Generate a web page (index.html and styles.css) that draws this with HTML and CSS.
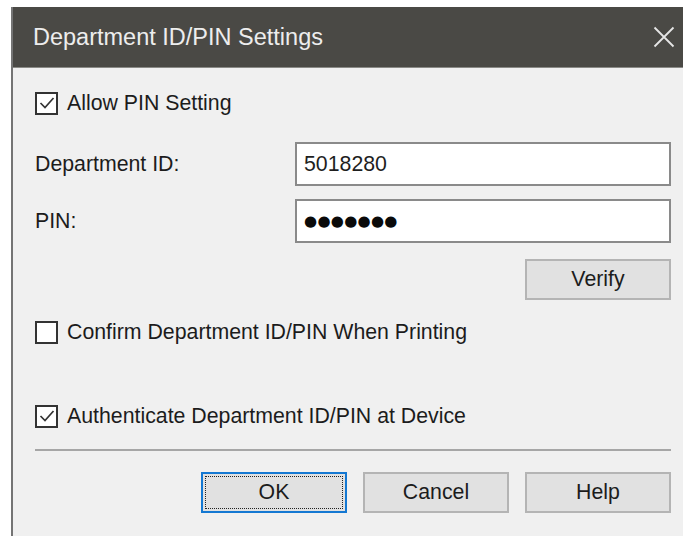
FILE: index.html
```html
<!DOCTYPE html>
<html lang="en">
<head>
<meta charset="utf-8">
<title>Department ID/PIN Settings</title>
<link rel="stylesheet" href="styles.css">
</head>
<body>
<div class="window">
  <div class="titlebar">
    <span class="title">Department ID/PIN Settings</span>
    <svg class="close" width="22" height="22" viewBox="0 0 22 22" aria-label="Close">
      <path d="M1.5 1.5 L20.5 20.5 M20.5 1.5 L1.5 20.5" stroke="#e6e6e6" stroke-width="1.8" fill="none"/>
    </svg>
  </div>
  <div class="content">
    <label class="check row-allow">
      <span class="box"><svg viewBox="0 0 18 18" width="18" height="18"><path d="M2.5 9 L7 13.5 L15.5 4" stroke="#333" stroke-width="1.7" fill="none"/></svg></span>
      <span>Allow PIN Setting</span>
    </label>

    <div class="field row-id">
      <span class="lbl">Department ID:</span>
      <div class="input">5018280</div>
    </div>
    <div class="field row-pin">
      <span class="lbl">PIN:</span>
      <div class="input"><span class="dots">●●●●●●●</span></div>
    </div>

    <div class="verify-row">
      <button class="btn">Verify</button>
    </div>

    <label class="check row-confirm">
      <span class="box"></span>
      <span>Confirm Department ID/PIN When Printing</span>
    </label>

    <label class="check row-auth">
      <span class="box"><svg viewBox="0 0 18 18" width="18" height="18"><path d="M2.5 9 L7 13.5 L15.5 4" stroke="#333" stroke-width="1.7" fill="none"/></svg></span>
      <span>Authenticate Department ID/PIN at Device</span>
    </label>

    <div class="separator"></div>

    <div class="actions">
      <button class="btn default"><span class="focus">OK</span></button>
      <button class="btn">Cancel</button>
      <button class="btn">Help</button>
    </div>
  </div>
</div>
</body>
</html>
```

FILE: styles.css
```css
html, body {
  margin: 0;
  padding: 0;
  background: #ffffff;
  height: 100%;
  overflow: hidden;
}

body {
  font-family: "Liberation Sans", Arial, sans-serif;
  font-size: 21.3px;
  color: #1c1c1c;
}

.window {
  margin: 7px 0 0 11px;
  border-left: 2px solid #747474;
  height: calc(100% - 7px);
  display: flex;
  flex-direction: column;
  background: #f0f0f0;
}

.titlebar {
  height: 60px;
  flex: none;
  background: #4a4945;
  border-bottom: 1px solid #8a8a86;
  display: flex;
  align-items: center;
  justify-content: space-between;
  padding: 0 8px 0 20px;
}

.title {
  color: #ededed;
  font-size: 23.5px;
}

.close {
  display: block;
}

.content {
  flex: 1;
  display: flex;
  flex-direction: column;
  padding: 23px 12px 0 22px;
}

.check {
  display: flex;
  align-items: center;
  height: 24px;
  gap: 9px;
}

.box {
  width: 23px;
  height: 23px;
  box-sizing: border-box;
  border: 2px solid #333333;
  background: #ffffff;
  display: flex;
  align-items: center;
  justify-content: center;
  flex: none;
}

.box svg {
  display: block;
}

.field {
  display: grid;
  grid-template-columns: 260px 1fr;
  align-items: center;
}

.row-id { margin-top: 27px; }
.row-pin { margin-top: 13px; }

.input {
  height: 44px;
  box-sizing: border-box;
  border: 2px solid #8a8a8a;
  background: #ffffff;
  display: flex;
  align-items: center;
  padding-left: 7px;
  color: #1e1e1e;
}

.dots {
  font-family: "DejaVu Sans", sans-serif;
  font-size: 15px;
  letter-spacing: 0.3px;
  color: #0a0a0a;
}

.verify-row {
  display: flex;
  justify-content: flex-end;
  margin-top: 16px;
}

.btn {
  width: 146px;
  height: 41px;
  box-sizing: border-box;
  border: 2px solid #b4b4b4;
  background: #e1e1e1;
  font-family: "Liberation Sans", Arial, sans-serif;
  font-size: 21.3px;
  color: #1c1c1c;
  padding: 0;
  display: flex;
  align-items: center;
  justify-content: center;
}

.btn.default {
  border: 2px solid #1478d2;
  padding: 2px;
}

.btn .focus {
  flex: 1;
  align-self: stretch;
  display: flex;
  align-items: center;
  justify-content: center;
  border: 1px dotted #222;
}

.row-confirm { margin-top: 20px; }
.row-auth { margin-top: 60px; }

.separator {
  margin-top: 21px;
  height: 2px;
  background: #a6a6a6;
}

.actions {
  display: flex;
  justify-content: flex-end;
  gap: 16px;
  margin-top: 21px;
}
```
